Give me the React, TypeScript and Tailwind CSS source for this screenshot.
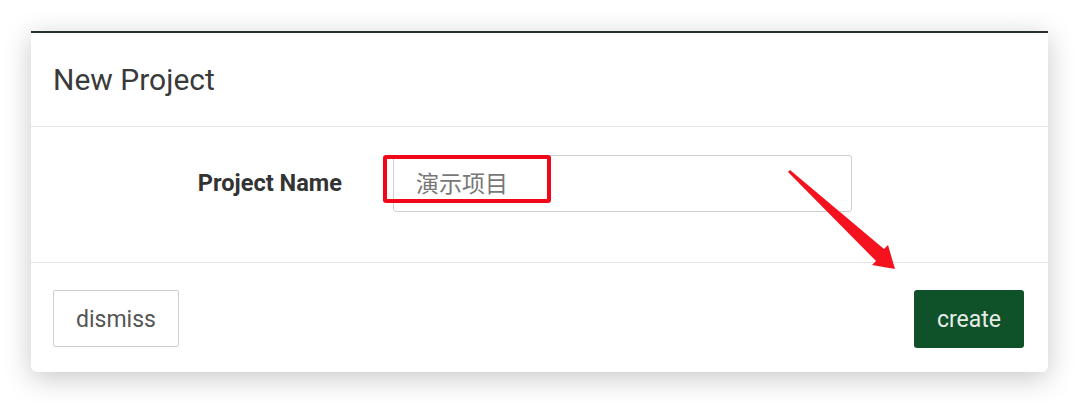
export default function App() {
    return (
        <div className="h-[403px] w-[1080px] bg-white pl-[31px] pt-[31px] font-['Roboto','Noto_Sans_CJK_SC',sans-serif]">
            <div className="relative w-[1017px] rounded-b-md border-t-2 border-[#26302f] bg-white shadow-[0_6px_28px_rgba(0,0,0,0.22)]">
                {/* Header */}
                <div className="flex h-[94px] items-center border-b border-[#e3e3e3] pl-[22px]">
                    <h1 className="text-[30px] font-normal text-[#3a3a3a]">New Project</h1>
                </div>

                {/* Body */}
                <div className="flex h-[136px] items-center border-b border-[#e3e3e3] pb-[22px]">
                    <label className="w-[311px] text-right text-[23.6px] font-bold text-[#333]">Project Name</label>
                    <div className="ml-[51px] flex h-[57px] w-[459px] items-center rounded-[3px] border border-[#cfcfcf] pb-[2px] pl-[22px] text-[23px] text-[#777] font-['Noto_Sans_CJK_SC',sans-serif]">
                        演示项目
                    </div>
                </div>

                {/* Footer */}
                <div className="flex h-[109px] items-start justify-between pl-[22px] pr-[24px] pt-[27px]">
                    <button className="h-[57px] w-[126px] rounded-[2px] border border-[#cfcfcf] bg-white pt-[4px] text-[23px] text-[#555]">
                        dismiss
                    </button>
                    <button className="h-[58px] w-[110px] rounded-[3px] bg-[#0f5229] pt-[3px] text-[23px] text-[#e6ece7]">
                        create
                    </button>
                </div>

                {/* Annotation: red box around the name */}
                <div className="absolute left-[352px] top-[122px] h-[48px] w-[168px] rounded-[3px] border-[4px] border-[#f0081a]" />

                {/* Annotation: arrow pointing at create */}
                <svg className="absolute left-[755px] top-[135px]" width="120" height="110" viewBox="0 0 120 110">
                    <polygon
                        points="4,2 98,81 102,77 109,101 86,97 90,93 2,4"
                        fill="#f4121e"
                    />
                </svg>
            </div>
        </div>
    );
}
